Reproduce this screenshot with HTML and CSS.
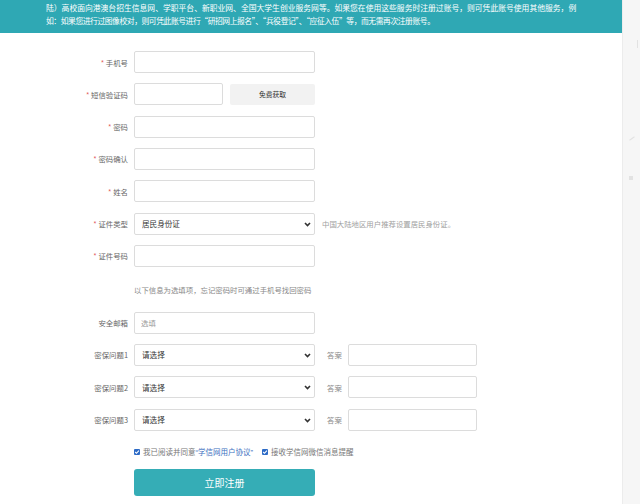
FILE: index.html
```html
<!DOCTYPE html>
<html lang="zh-CN">
<head>
<meta charset="utf-8">
<title>注册</title>
<link rel="stylesheet" href="styles.css">
</head>
<body>
<div class="page">
  <div class="main">
    <div class="banner">
      <span class="bline">陆）高校面向港澳台招生信息网、学职平台、新职业网、全国大学生创业服务网等。如果您在使用这些服务时注册过账号，则可凭此账号使用其他服务，例</span>
      <span class="bline bline2">如：如果您进行过图像校对，则可凭此账号进行“研招网上报名”、“兵役登记”、“应征入伍”等，而无需再次注册账号。</span>
    </div>
    <form class="form">
      <div class="row">
        <label class="label"><span class="req">*</span> 手机号</label>
        <input class="input" type="text">
      </div>
      <div class="row">
        <label class="label"><span class="req">*</span> 短信验证码</label>
        <input class="input input-sms" type="text">
        <button type="button" class="btn-code">免费获取</button>
      </div>
      <div class="row">
        <label class="label"><span class="req">*</span> 密码</label>
        <input class="input" type="password">
      </div>
      <div class="row">
        <label class="label"><span class="req">*</span> 密码确认</label>
        <input class="input" type="password">
      </div>
      <div class="row">
        <label class="label"><span class="req">*</span> 姓名</label>
        <input class="input" type="text">
      </div>
      <div class="row">
        <label class="label"><span class="req">*</span> 证件类型</label>
        <div class="select-wrap">
          <select class="select"><option>居民身份证</option></select>
          <svg class="chev" width="7" height="5" viewBox="0 0 7 5"><path d="M1 1 L3.5 3.6 L6 1" fill="none" stroke="#333" stroke-width="1.6"/></svg>
        </div>
        <span class="hint">中国大陆地区用户推荐设置居民身份证。</span>
      </div>
      <div class="row">
        <label class="label"><span class="req">*</span> 证件号码</label>
        <input class="input" type="text">
      </div>
      <div class="row row-note">
        <span class="label"></span>
        <span class="note">以下信息为选填项，忘记密码时可通过手机号找回密码</span>
      </div>
      <div class="row">
        <label class="label">安全邮箱</label>
        <input class="input" type="text" placeholder="选填">
      </div>
      <div class="row">
        <label class="label">密保问题1</label>
        <div class="select-wrap">
          <select class="select"><option>请选择</option></select>
          <svg class="chev" width="7" height="5" viewBox="0 0 7 5"><path d="M1 1 L3.5 3.6 L6 1" fill="none" stroke="#333" stroke-width="1.6"/></svg>
        </div>
        <label class="alabel">答案</label>
        <input class="input input-ans" type="text">
      </div>
      <div class="row">
        <label class="label">密保问题2</label>
        <div class="select-wrap">
          <select class="select"><option>请选择</option></select>
          <svg class="chev" width="7" height="5" viewBox="0 0 7 5"><path d="M1 1 L3.5 3.6 L6 1" fill="none" stroke="#333" stroke-width="1.6"/></svg>
        </div>
        <label class="alabel">答案</label>
        <input class="input input-ans" type="text">
      </div>
      <div class="row">
        <label class="label">密保问题3</label>
        <div class="select-wrap">
          <select class="select"><option>请选择</option></select>
          <svg class="chev" width="7" height="5" viewBox="0 0 7 5"><path d="M1 1 L3.5 3.6 L6 1" fill="none" stroke="#333" stroke-width="1.6"/></svg>
        </div>
        <label class="alabel">答案</label>
        <input class="input input-ans" type="text">
      </div>
      <div class="row row-check">
        <span class="label"></span>
        <span class="check"><svg width="6" height="6" viewBox="0 0 6 6"><path d="M1.2 3 L2.5 4.3 L4.9 1.6" fill="none" stroke="#fff" stroke-width="1.1"/></svg></span>
        <span class="ctext">我已阅读并同意<a class="link" href="#"><span class="q">“</span>学信网用户协议<span class="q">”</span></a></span>
        <span class="check check2"><svg width="6" height="6" viewBox="0 0 6 6"><path d="M1.2 3 L2.5 4.3 L4.9 1.6" fill="none" stroke="#fff" stroke-width="1.1"/></svg></span>
        <span class="ctext">接收学信网微信消息提醒</span>
      </div>
      <div class="row row-btn">
        <span class="label"></span>
        <button type="button" class="btn-submit">立即注册</button>
      </div>
    </form>
  </div>
  <div class="side">
    <span class="side-mark m1"></span>
    <span class="side-mark m2"></span>
    <span class="side-mark m3"></span>
  </div>
</div>
</body>
</html>
```
FILE: styles.css
```css
html, body {
  margin: 0;
  padding: 0;
  background: #fff;
}
body {
  font-family: "Noto Sans CJK SC", "Noto Sans", sans-serif;
  color: #666;
  font-size: 7.4px;
}
.page {
  display: flex;
  width: 640px;
  height: 504px;
  overflow: hidden;
}
.main {
  width: 622px;
  flex: none;
}
.side {
  flex: 1;
  background: #f6f6f6;
  border-left: 1px solid #ececec;
  position: relative;
}
.side-mark {
  position: absolute;
  background: #e2e2e2;
}
.side-mark.m1 { left: 14px; top: 40px; width: 1px; height: 8px; }
.side-mark.m2 { left: 6px; top: 138px; width: 6px; height: 1px; transform: rotate(-35deg); }
.side-mark.m3 { left: 6px; top: 176px; width: 4px; height: 4px; }

.banner {
  height: 33px;
  box-sizing: border-box;
  background: #2fa8b4;
  color: #fff;
  padding: 1px 0 0 46px;
  line-height: 13px;
  font-size: 7.8px;
}
.bline {
  display: block;
  white-space: nowrap;
}
.bline2 {
  letter-spacing: -0.45px;
}

.form {
  display: flex;
  flex-direction: column;
  padding-top: 18px;
  margin: 0;
}
.row {
  display: flex;
  align-items: center;
  height: 22px;
  margin-bottom: 10.33px;
}
.label {
  width: 128px;
  flex: none;
  margin-right: 6px;
  text-align: right;
  color: #666;
  white-space: nowrap;
}
.req {
  color: #e25c5c;
}
.input {
  box-sizing: border-box;
  width: 181px;
  height: 22px;
  border: 1px solid #dcdcdc;
  border-radius: 2px;
  background: #fff;
  padding: 0 6px;
  font-family: inherit;
  font-size: 7.4px;
  color: #333;
  outline: none;
  margin: 0;
}
.input::placeholder {
  color: #999;
}
.input-sms {
  width: 89px;
}
.btn-code {
  box-sizing: border-box;
  width: 85px;
  height: 21px;
  margin: 0 0 0 7px;
  border: none;
  border-radius: 2px;
  background: #f2f2f2;
  color: #333;
  font-family: inherit;
  font-size: 6.8px;
  padding: 0;
}
.select-wrap {
  position: relative;
  width: 181px;
  height: 22px;
  flex: none;
}
.select {
  appearance: none;
  -webkit-appearance: none;
  box-sizing: border-box;
  width: 181px;
  height: 22px;
  border: 1px solid #dcdcdc;
  border-radius: 2px;
  background: #fff;
  padding: 0 0 0 7px;
  font-family: inherit;
  font-size: 7.6px;
  color: #333;
  margin: 0;
  outline: none;
}
.chev {
  position: absolute;
  left: 170px;
  top: 9px;
}
.hint {
  margin-left: 7px;
  color: #a0a0a0;
  white-space: nowrap;
}
.row-note {
  height: 24px;
}
.note {
  color: #888;
  white-space: nowrap;
}
.alabel {
  width: 16px;
  margin-left: 12px;
  margin-right: 5px;
  color: #888;
  white-space: nowrap;
}
.input-ans {
  width: 129px;
}
.row-check {
  margin-bottom: 6.3px;
  font-size: 7.5px;
}
.check {
  width: 6px;
  height: 6px;
  flex: none;
  background: #2d6bc6;
  border-radius: 1px;
  display: flex;
  align-items: center;
  justify-content: center;
}
.check2 {
  margin-left: 9px;
}
.ctext {
  margin-left: 3px;
  color: #777;
  white-space: nowrap;
}
.link {
  color: #3c6fc0;
  text-decoration: none;
}
.q {
  font-family: "Liberation Sans", sans-serif;
}
.row-btn {
  height: 26.4px;
  margin-bottom: 0;
}
.btn-submit {
  box-sizing: border-box;
  width: 181px;
  height: 26.4px;
  margin: 0;
  border: none;
  border-radius: 3px;
  background: #35adb6;
  color: #fff;
  font-family: inherit;
  font-size: 10px;
  padding: 0;
}
```
